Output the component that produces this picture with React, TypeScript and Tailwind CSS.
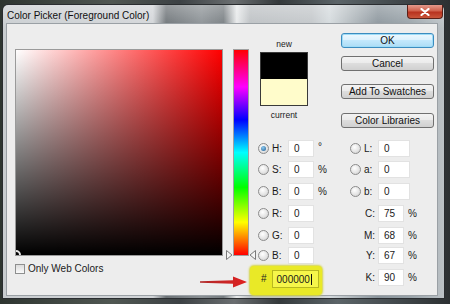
import type { ReactNode } from "react";

const font = "font-['Liberation_Sans',Arial,sans-serif]";

function Radio({ checked }: { checked?: boolean }) {
  return (
    <span className="flex h-[11px] w-[11px] shrink-0 items-center justify-center rounded-full border border-[#8c8c8c] bg-[radial-gradient(circle_at_40%_35%,#ffffff,#e2e2e2_60%,#c6c6c6)]">
      {checked && (
        <span className="h-[5px] w-[5px] rounded-full bg-[radial-gradient(circle_at_40%_35%,#8ecbf2,#1b5a90)]" />
      )}
    </span>
  );
}

function Input({ value, w }: { value: string; w: string }) {
  return (
    <span
      className={`flex h-[17px] ${w} shrink-0 items-center border border-[#e2e2e2] bg-white pl-[5px] text-[10px] text-[#1a1a1a]`}
    >
      {value}
    </span>
  );
}

function Field({
  label,
  value,
  unit,
  checked,
}: {
  label: string;
  value: string;
  unit?: string;
  checked?: boolean;
}) {
  return (
    <div className="flex w-[100px] shrink-0 items-center">
      <span className="ml-[8px]">
        <Radio checked={checked} />
      </span>
      <span className="ml-[3px] w-[16px] text-[10px] text-[#1a1a1a]">{label}</span>
      <Input value={value} w="w-[26px]" />
      {unit && (
        <span
          className={`ml-[4px] text-[10px] text-[#1a1a1a] ${unit === "°" ? "self-start -mt-[1px]" : ""}`}
        >
          {unit}
        </span>
      )}
    </div>
  );
}

function Lab({ label, value }: { label: string; value: string }) {
  return (
    <div className="flex items-center">
      <Radio />
      <span className="ml-[3px] w-[14px] text-[10px] text-[#1a1a1a]">{label}</span>
      <Input value={value} w="w-[32px]" />
    </div>
  );
}

function Cmyk({ label, value }: { label: string; value: string }) {
  return (
    <div className="flex items-center">
      <span className="w-[28px] pr-[3px] text-right text-[10px] text-[#1a1a1a]">{label}</span>
      <Input value={value} w="w-[26px]" />
      <span className="ml-[4px] text-[10px] text-[#1a1a1a]">%</span>
    </div>
  );
}

function Row({ children, mt }: { children: ReactNode; mt: string }) {
  return <div className={`flex h-[17px] items-center ${mt}`}>{children}</div>;
}

const btn =
  "flex h-[15px] w-[93px] items-center justify-center rounded-[3px] border text-[10px] leading-none text-[#111]";
const grey =
  "border-[#707070] bg-[linear-gradient(to_bottom,#f3f3f3_0%,#ebebeb_45%,#dddddd_50%,#d0d0d0_100%)]";

export default function App() {
  return (
    <div
      className={`h-[304px] w-[450px] overflow-hidden bg-[linear-gradient(to_right,#2e3530_0%,#505752_25%,#3c4144_40%,#6a6e70_52%,#34393b_62%,#5b6468_75%,#2c3032_100%)] pl-[3px] pt-[5px] ${font}`}
    >
      <div className="flex h-[293px] w-[441px] flex-col rounded-t-[5px] bg-[linear-gradient(to_bottom,rgba(255,255,255,0.3),rgba(255,255,255,0)_8%),linear-gradient(to_right,#c9cdd0_0%,#d2d5d8_34%,#6c7276_37%,#8a9094_45%,#767c80_50%,#e8eaeb_53%,#bcc0c3_56%,#c2c6c9_70%,#d4dadd_74%,#b9c0c4_78%,#8a949b_85%,#98a2a8_92%,#bcc2c6_100%)] pb-[3px] pl-[4px] pr-[7px] shadow-[0_0_0_1px_#2a2d30]">
        {/* title bar */}
        <div className="flex h-[19px] shrink-0 items-start">
          <span className="mt-[5px] text-[10px] leading-[11px] text-[#101010]">
            Color Picker (Foreground Color)
          </span>
          <span className="-mr-[6px] ml-auto flex h-[14px] w-[36px] items-center justify-center rounded-b-[4px] border border-t-0 border-[#5a2018] bg-[linear-gradient(to_bottom,#e39a8c_0%,#d0614c_45%,#b8321f_55%,#c9553a_100%)]">
            <svg width="10" height="8" viewBox="0 0 10 8">
              <path d="M1.5 1 L8.5 7 M8.5 1 L1.5 7" stroke="#fff" strokeWidth="2.2" strokeLinecap="round" />
            </svg>
          </span>
        </div>

        {/* client area */}
        <div className="relative flex flex-1 bg-[#ededed] shadow-[0_0_0_1px_#9aa0a5]">
          {/* picker + hue */}
          <div className="ml-[8px] mt-[25px] flex flex-col">
            <div className="flex">
              <div className="relative h-[207px] w-[208px] overflow-hidden border border-[#9a9a9a] bg-[linear-gradient(to_bottom,rgba(0,0,0,0),#000),linear-gradient(to_right,#fff,#f00)]">
                <span className="absolute -bottom-[5px] -left-[5px] h-[10px] w-[10px] rounded-full border-2 border-[#e8e8e8]" />
              </div>
              <div className="relative ml-[10px] h-[207px] w-[16px] border border-[#a0a0a0] bg-[linear-gradient(to_bottom,#f00_0%,#f0f_18%,#00f_34%,#0ff_50%,#0f0_67%,#ff0_84%,#f00_100%)]">
                <svg className="absolute -left-[8px] bottom-[-5px]" width="7" height="10" viewBox="0 0 7 10">
                  <path d="M0.5 0.5 L6 5 L0.5 9.5 Z" fill="#f4f4f4" stroke="#7a7a7a" />
                </svg>
                <svg className="absolute -right-[8px] bottom-[-5px]" width="7" height="10" viewBox="0 0 7 10">
                  <path d="M6.5 0.5 L1 5 L6.5 9.5 Z" fill="#f4f4f4" stroke="#7a7a7a" />
                </svg>
              </div>
            </div>
            <div className="mt-[8px] flex items-center">
              <span className="h-[10px] w-[10px] border border-[#8e8f8f] bg-[linear-gradient(to_bottom,#dcdcdc,#fafafa)]" />
              <span className="ml-[3px] text-[10px] leading-[10px] text-[#1a1a1a]">Only Web Colors</span>
            </div>
          </div>

          {/* right side */}
          <div className="ml-[1px] flex flex-1 flex-col pt-[9px]">
            <div className="flex items-start">
              <div className="ml-[10px] mt-[6px] flex w-[48px] flex-col items-center">
                <span className="text-[8.5px] leading-[10px] text-[#222]">new</span>
                <div className="mt-[3px] flex h-[54px] w-[48px] flex-col border border-[#3a3a3a]">
                  <div className="flex-1 bg-black" />
                  <div className="flex-1 bg-[#fffccb]" />
                </div>
                <span className="mt-[4px] text-[8.5px] leading-[10px] text-[#222]">current</span>
              </div>
              <div className="ml-auto mr-[3px] flex w-[93px] flex-col">
                <span className={`${btn} border-[#3c8cbf] bg-[linear-gradient(to_bottom,#eef8fe_0%,#dcf1fd_45%,#c3e8fc_50%,#acdcf5_100%)] shadow-[inset_0_0_0_1px_#9fdcf7]`}>
                  OK
                </span>
                <span className={`${btn} ${grey} mt-[8px]`}>Cancel</span>
                <span className={`${btn} ${grey} mt-[13px]`}>Add To Swatches</span>
                <span className={`${btn} ${grey} mt-[14px]`}>Color Libraries</span>
              </div>
            </div>

            <div className="mt-[12px] flex flex-col">
              <Row mt="">
                <Field label="H:" value="0" unit="°" checked />
                <Lab label="L:" value="0" />
              </Row>
              <Row mt="mt-[4px]">
                <Field label="S:" value="0" unit="%" />
                <Lab label="a:" value="0" />
              </Row>
              <Row mt="mt-[5px]">
                <Field label="B:" value="0" unit="%" />
                <Lab label="b:" value="0" />
              </Row>
              <Row mt="mt-[5px]">
                <Field label="R:" value="0" />
                <Cmyk label="C:" value="75" />
              </Row>
              <Row mt="mt-[5px]">
                <Field label="G:" value="0" />
                <Cmyk label="M:" value="68" />
              </Row>
              <Row mt="mt-[3px]">
                <Field label="B:" value="0" />
                <Cmyk label="Y:" value="67" />
              </Row>
              <div className="mt-[5px] flex h-[17px] items-start">
                <div className="w-[100px] shrink-0">
                  <div className="-mt-[3px] flex h-[29px] w-[72px] items-start rounded-[4px] bg-[#e9e927] pt-[4px] shadow-[0_0_2px_1px_#d6d640]">
                    <span className="ml-[11px] mt-[3px] text-[10px] leading-[11px] text-[#222]">#</span>
                    <span className="ml-[5px] flex h-[18px] w-[47px] items-center border border-[#b8b820] bg-[#f6f64a] pl-[4px] text-[10px] text-[#1a1a1a]">
                      000000<span className="ml-[1px] h-[11px] w-[1px] bg-[#111]" />
                    </span>
                  </div>
                </div>
                <Cmyk label="K:" value="90" />
              </div>
            </div>
          </div>

          {/* red annotation arrow */}
          <svg className="absolute left-[193px] top-[252px]" width="48" height="12" viewBox="0 0 48 12">
            <defs>
              <linearGradient id="ar" x1="0" x2="1" y1="0" y2="0">
                <stop offset="0" stopColor="#b02a2a" />
                <stop offset="1" stopColor="#e02020" />
              </linearGradient>
            </defs>
            <path d="M0 5.2 L33 4.3 L33 0.5 L47 6 L33 11.5 L33 7.7 L0 6.8 Z" fill="url(#ar)" />
          </svg>
        </div>
      </div>
    </div>
  );
}
